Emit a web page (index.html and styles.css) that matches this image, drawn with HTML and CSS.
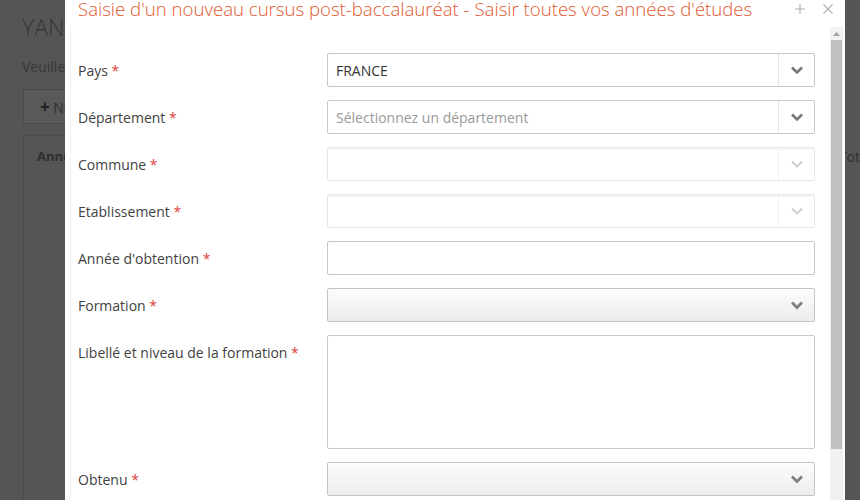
FILE: index.html
```html
<!DOCTYPE html>
<html lang="fr">
<head>
    <meta charset="UTF-8">
    <title>Cursus post-baccalauréat</title>
    <link rel="stylesheet" href="styles.css">
</head>
<body>
    <div class="page">
        <h1 class="page-title">YANNICK</h1>
        <p class="page-text">Veuillez saisir vos cursus</p>
        <button class="page-btn"><span class="plus">+</span> Nouveau</button>
        <div class="page-table">
            <div class="page-th">Année</div>
            <div class="page-th right">Tot</div>
        </div>
    </div>

    <div class="modal">
        <div class="modal-header">
            <h2 class="modal-title">Saisie d'un nouveau cursus post-baccalauréat - Saisir toutes vos années d'études</h2>
            <div class="modal-tools">
                <svg width="12" height="12" viewBox="0 0 12 12"><path d="M6 1v10M1 6h10" stroke="#b0b0b0" stroke-width="1.1" fill="none"/></svg>
                <svg width="12" height="12" viewBox="0 0 12 12"><path d="M1.5 1.5l9 9M10.5 1.5l-9 9" stroke="#b0b0b0" stroke-width="1.1" fill="none"/></svg>
            </div>
        </div>
        <div class="modal-body">
            <form class="form">
                <div class="row">
                    <label>Pays <span class="req">*</span></label>
                    <div class="select">
                        <span class="value">FRANCE</span>
                        <span class="arrow"><svg width="14" height="10" viewBox="0 0 14 10"><path d="M2 2.5l5 5 5-5" stroke="#777" stroke-width="2.6" fill="none"/></svg></span>
                    </div>
                </div>
                <div class="row">
                    <label>Département <span class="req">*</span></label>
                    <div class="select">
                        <span class="value placeholder">Sélectionnez un département</span>
                        <span class="arrow"><svg width="14" height="10" viewBox="0 0 14 10"><path d="M2 2.5l5 5 5-5" stroke="#777" stroke-width="2.6" fill="none"/></svg></span>
                    </div>
                </div>
                <div class="row">
                    <label>Commune <span class="req">*</span></label>
                    <div class="select disabled">
                        <span class="value"></span>
                        <span class="arrow"><svg width="14" height="10" viewBox="0 0 14 10"><path d="M2 2.5l5 5 5-5" stroke="#d0d0d0" stroke-width="2.2" fill="none"/></svg></span>
                    </div>
                </div>
                <div class="row">
                    <label>Etablissement <span class="req">*</span></label>
                    <div class="select disabled">
                        <span class="value"></span>
                        <span class="arrow"><svg width="14" height="10" viewBox="0 0 14 10"><path d="M2 2.5l5 5 5-5" stroke="#d0d0d0" stroke-width="2.2" fill="none"/></svg></span>
                    </div>
                </div>
                <div class="row">
                    <label>Année d'obtention <span class="req">*</span></label>
                    <div class="input"></div>
                </div>
                <div class="row">
                    <label>Formation <span class="req">*</span></label>
                    <div class="select native">
                        <span class="value"></span>
                        <span class="arrow"><svg width="14" height="10" viewBox="0 0 14 10"><path d="M2 2.5l5 5 5-5" stroke="#808080" stroke-width="2.8" fill="none"/></svg></span>
                    </div>
                </div>
                <div class="row">
                    <label>Libellé et niveau de la formation <span class="req">*</span></label>
                    <div class="input textarea"></div>
                </div>
                <div class="row">
                    <label>Obtenu <span class="req">*</span></label>
                    <div class="select native">
                        <span class="value"></span>
                        <span class="arrow"><svg width="14" height="10" viewBox="0 0 14 10"><path d="M2 2.5l5 5 5-5" stroke="#808080" stroke-width="2.8" fill="none"/></svg></span>
                    </div>
                </div>
            </form>
            <div class="scrollbar">
                <div class="scroll-up"><svg width="7" height="4" viewBox="0 0 7 4"><path d="M0 4L3.5 0 7 4z" fill="#a3a3a3"/></svg></div>
                <div class="scroll-thumb"></div>
            </div>
        </div>
    </div>
</body>
</html>
```

FILE: styles.css
```css
body {
    margin: 0;
    font-family: 'Open Sans', 'Noto Sans', sans-serif;
    background-color: #555555;
    overflow: hidden;
}

/* page behind the overlay */
.page {
    padding: 14px 15px 0 23px;
    color: #353535;
}
.page-title {
    margin: 0 0 0 -1px;
    font-size: 23px;
    font-weight: 300;
    line-height: 26px;
    color: #353535;
}
.page-text {
    margin: 17px 0 0 -1px;
    font-size: 14px;
    line-height: 20px;
    color: #383838;
}
.page-btn {
    margin-top: 12px;
    height: 35px;
    width: 120px;
    text-align: left;
    padding: 0 0 0 16px;
    background-color: #595959;
    border: 1px solid #4a4a4a;
    border-radius: 2px;
    font-family: inherit;
    font-size: 14px;
    color: #2f2f2f;
}
.plus { font-weight: bold; font-size: 17px; color: #222; }
.page-table {
    margin-top: 11px;
    height: 400px;
    border: 1px solid #4c4c4c;
    display: flex;
    justify-content: space-between;
    padding: 11px 0 0 13px;
}
.page-th { font-weight: bold; font-size: 13px; color: #2f2f2f; }
.page-th.right { margin-right: -16px; font-weight: normal; font-size: 14px; }

/* modal */
.modal {
    position: absolute;
    top: 0;
    left: 65px;
    width: 780px;
    height: 500px;
    background-color: #fff;
    display: flex;
    flex-direction: column;
}
.modal-header {
    height: 27px;
    display: flex;
    justify-content: space-between;
    padding-left: 13px;
}
.modal-title {
    margin: -1px 0 0 0;
    font-size: 18.6px;
    font-weight: 300;
    line-height: 20px;
    color: #e2582f;
    white-space: nowrap;
}
.modal-tools {
    display: flex;
    gap: 16px;
    padding: 3px 11px 0 0;
}
.modal-body {
    flex: 1;
    display: flex;
    min-height: 0;
}
.form {
    flex: 1;
    padding: 26px 15px 0 7px;
    border-left: 1px solid #f3f3f3;
    margin-left: 5px;
}
.row {
    display: flex;
    margin-bottom: 13px;
}
.row label {
    width: 249px;
    font-size: 14px;
    line-height: 35px;
    height: 34px;
    color: #424242;
}
.req { color: #e0433a; }

.select, .input {
    flex: 1;
    height: 34px;
    box-sizing: border-box;
    border: 1px solid #c9c9c9;
    border-radius: 2px;
    background-color: #fff;
    display: flex;
    align-items: center;
}
.select .value {
    flex: 1;
    padding-left: 8px;
    font-size: 14px;
    color: #333;
}
.select .placeholder { color: #9a9a9a; }
.select .arrow {
    width: 35px;
    height: 100%;
    border-left: 1px solid #e2e2e2;
    display: flex;
    align-items: center;
    justify-content: center;
}
.select.disabled {
    border-color: #e6e6e6;
    box-shadow: inset 0 2px 0 #f4f4f4;
}
.select.disabled .arrow { border-left-color: #f0f0f0; }
.select.native {
    border-color: #c4c4c4;
    background: linear-gradient(#fcfcfc, #ececec);
}
.select.native .arrow { border-left: none; }
.input.textarea { height: 114px; }

/* scrollbar */
.scrollbar {
    width: 13px;
    margin-right: 2px;
    background-color: #f1f1f1;
    display: flex;
    flex-direction: column;
}
.scroll-up {
    height: 13px;
    display: flex;
    align-items: center;
    justify-content: center;
}
.scroll-thumb {
    height: 409px;
    margin: 0 1px;
    background-color: #c1c1c1;
}
```
